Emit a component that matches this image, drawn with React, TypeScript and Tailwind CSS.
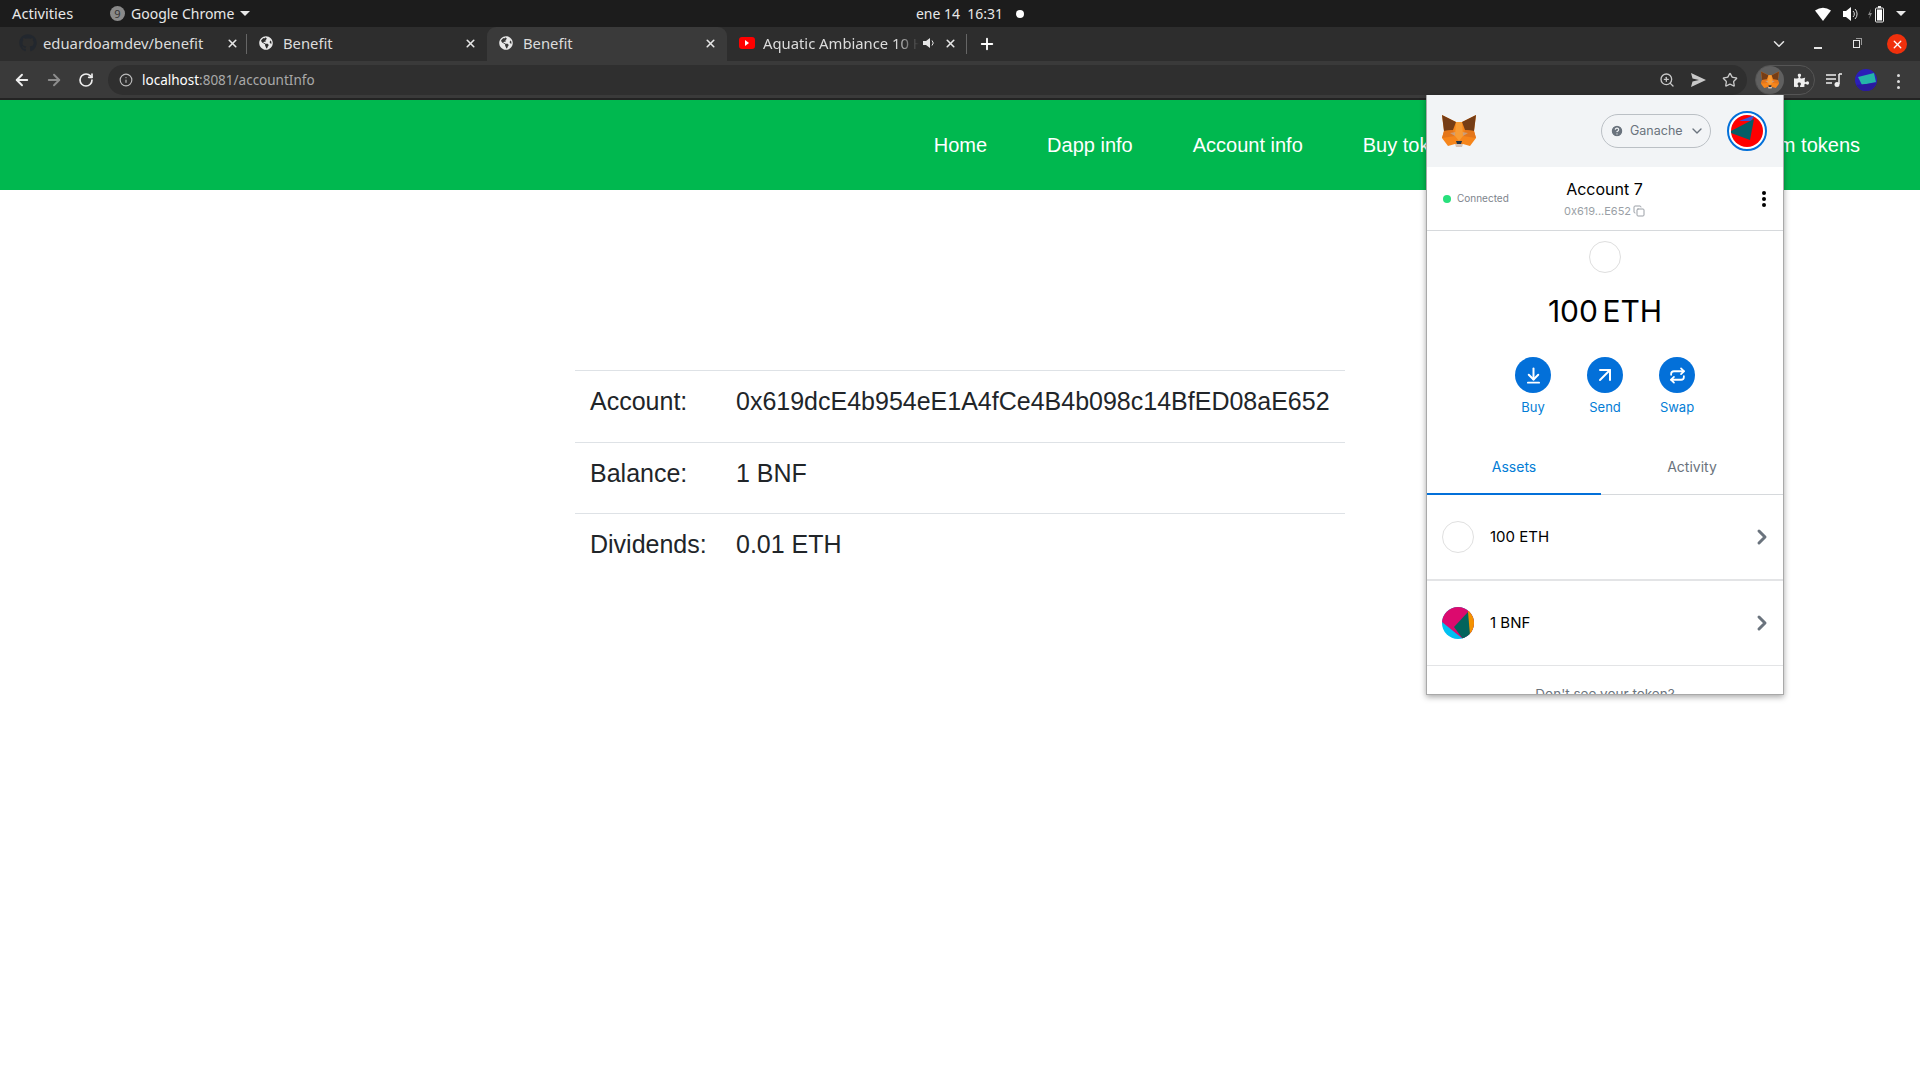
import React from 'react';
import { ArrowDownToLine, ArrowLeft, ArrowRight, ArrowUpRight, ChevronDown, ChevronRight, Copy, HelpCircle, Info, Plus, Repeat, RotateCw, Star, X, ZoomIn } from 'lucide-react';
import { FaGithub, FaGlobeAmericas, FaPuzzlePiece } from 'react-icons/fa';

const uiFont = "font-['Noto_Sans',sans-serif]";
const mmFont = "font-['Inter',sans-serif]";

const Fox: React.FC<{ size: number }> = ({ size }) => (
  <svg width={size} height={size} viewBox="0 0 34 34">
    <polygon points="0,1 14,8 20,8 34,1 32,17 34,24 28,32 21,30 13,30 6,32 0,24 2,17" fill="#f6851b" />
    <polygon points="0,1 14,8 11,16 2,17" fill="#763d16" />
    <polygon points="34,1 20,8 23,16 32,17" fill="#763d16" />
    <polygon points="2,17 11,16 13,22 0,24" fill="#e4761b" />
    <polygon points="32,17 23,16 21,22 34,24" fill="#e4761b" />
    <polygon points="8,19 14,18 13,22" fill="#c0ad9e" opacity="0.7" />
    <polygon points="26,19 20,18 21,22" fill="#c0ad9e" opacity="0.7" />
    <polygon points="13,30 21,30 20,33 14,33" fill="#d7c1b3" />
    <polygon points="14,27 20,27 19,30 15,30" fill="#233447" />
    <polygon points="14,8 20,8 21,22 17,27 13,22" fill="#f89c35" />
  </svg>
);

const Tab: React.FC<{ icon: React.ReactNode; title: string; active?: boolean; sep?: boolean; audio?: boolean }> = ({ icon, title, active, sep, audio }) => (
  <div className={`relative flex w-[240px] items-center pl-[12px] ${sep && !audio ? 'pr-[6px]' : 'pr-[8px]'} ${active ? 'h-[38px] rounded-t-[9px] bg-[#3a3a3a] pb-[6px]' : 'h-[34px] self-start pb-[2px]'}`}>
    <div className="flex w-[24px] shrink-0 items-center">{icon}</div>
    <span className={`min-w-0 flex-1 overflow-hidden whitespace-nowrap text-[14.800px] text-[#dcdcdc] ${audio ? 'mr-[4px] [mask-image:linear-gradient(to_right,black_85%,transparent)]' : ''}`}>{title}</span>
    {audio && (
      <svg width="12" height="12" viewBox="0 0 12 12" className="mr-[9px] shrink-0">
        <path d="M0 4h3l4-3v10L3 8H0z" fill="#e6e6e6" />
        <path d="M9 3.500a3.500 3.500 0 0 1 0 5" stroke="#e6e6e6" fill="none" />
      </svg>
    )}
    <X size={13} strokeWidth={3} className="mr-[2px] shrink-0 text-[#e6e6e6]" />
    {sep && <div className="absolute right-0 top-[7px] h-[20px] w-px bg-[#666]" />}
  </div>
);

const TopBar = () => (
  <div className={`flex h-[27px] items-center justify-between bg-[#1c1c1c] pl-[12px] pr-[14px] text-[14px] text-[#e8e8e8] ${uiFont}`}>
    <div className="flex flex-1 items-center">
      <span className="w-[62px] text-[14.700px]">Activities</span>
      <div className="ml-[36px] flex h-[15px] w-[15px] items-center justify-center rounded-full bg-[#8a8a8a] text-[11px] leading-none text-[#333]">9</div>
      <span className="ml-[6px]">Google Chrome</span>
      <div className="ml-[6px] h-0 w-0 border-x-[5px] border-t-[5px] border-x-transparent border-t-[#e8e8e8]" />
    </div>
    <div className="ml-[22px] flex items-center">
      <span>ene 14&nbsp; 16:31</span>
      <div className="ml-[13px] h-[8px] w-[8px] rounded-full bg-white" />
    </div>
    <div className="flex flex-1 items-center justify-end">
      <svg width="16" height="14" viewBox="0 0 16 14"><path d="M0 3.500Q8 -2 16 3.500L8 14z" fill="#fff" /></svg>
      <svg width="16" height="14" viewBox="0 0 16 14" className="ml-[12px]">
        <path d="M0 4h3l5-4v14l-5-4H0z" fill="#fff" />
        <path d="M10 4a4 4 0 0 1 0 6M12 2a7 7 0 0 1 0 10" stroke="#ddd" fill="none" />
      </svg>
      <svg width="16" height="18" viewBox="0 0 16 18" className="ml-[9px]">
        <path d="M3 4L0 10h2l-1 4 3-6H2z" fill="#888" />
        <rect x="7.500" y="3" width="8" height="14" rx="1" fill="none" stroke="#eee" />
        <rect x="9" y="4.500" width="5" height="11" fill="#fff" />
        <rect x="10" y="1" width="3" height="2" fill="#eee" />
      </svg>
      <div className="ml-[12px] h-0 w-0 border-x-[5px] border-t-[5px] border-x-transparent border-t-[#e8e8e8]" />
    </div>
  </div>
);

const TabStrip = () => (
  <div className={`flex h-[38px] items-start bg-[#3a3a3a] ${uiFont}`}>
    <div className="flex h-[34px] flex-1 items-start bg-[#2d2d2d] pl-[7px]">
      <Tab icon={<FaGithub size={18} className="text-[#22272e]" />} title="eduardoamdev/benefit" sep />
      <Tab icon={<FaGlobeAmericas size={14} className="text-[#e8e8e8]" />} title="Benefit" />
      <Tab icon={<FaGlobeAmericas size={14} className="text-[#e8e8e8]" />} title="Benefit" active />
      <Tab
        icon={
          <div className="flex h-[12px] w-[16px] items-center justify-center rounded-[3px] bg-[#f00]">
            <div className="h-0 w-0 border-y-[3px] border-l-[4px] border-y-transparent border-l-white" />
          </div>
        }
        title="Aquatic Ambiance 10 H"
        audio
        sep
      />
      <Plus size={18} strokeWidth={2.500} className="ml-[11px] mt-[8px] text-white" />
      <div className="flex h-[34px] flex-1 items-center justify-end pr-[13px] text-[#e6e6e6]">
        <ChevronDown size={18} />
        <div className="ml-[26px] mt-[8px] h-[1.500px] w-[8px] bg-[#e6e6e6]" />
        <div className="relative ml-[31px] h-[8px] w-[7px] border border-[#e6e6e6]">
          <div className="absolute -right-[3px] -top-[3px] h-[7px] w-[6px] border-r border-t border-[#999]" />
        </div>
        <div className="ml-[27px] flex h-[20px] w-[20px] items-center justify-center rounded-full bg-[#f0300c]">
          <X size={13} strokeWidth={2.500} className="text-white" />
        </div>
      </div>
    </div>
  </div>
);

const Toolbar = () => (
  <div className={`flex h-[35px] items-start border-b-2 border-[#232323] bg-[#3a3a3a] pl-[13px] pr-[14px] ${uiFont}`}>
    <ArrowLeft size={18} strokeWidth={2.500} className="mt-[6px] text-[#eee]" />
    <ArrowRight size={18} strokeWidth={2.500} className="ml-[14px] mt-[6px] text-[#8d8d8d]" />
    <RotateCw size={16} strokeWidth={2.500} className="ml-[15px] mt-[7px] text-[#eee]" />
    <div className="ml-[14px] flex h-[30px] w-[1639px] items-center rounded-full bg-[#2f2f2f] pl-[11px] pr-[9px]">
      <Info size={14} className="text-[#bbb]" />
      <span className="ml-[9px] text-[13.500px] text-white">localhost<span className="text-[#a9a9a9]">:8081/accountInfo</span></span>
      <div className="flex-1" />
      <ZoomIn size={16} className="text-[#c8c8c8]" />
      <svg width="15" height="14" viewBox="0 0 15 14" className="ml-[16px]"><path d="M0 0l15 7L0 14l1.500-5.500L8 7 1.500 5.500z" fill="#c8c8c8" /></svg>
      <Star size={16} strokeWidth={2} className="ml-[16px] text-[#c8c8c8]" />
    </div>
    <div className="ml-[8px] flex h-[30px] w-[60px] items-center rounded-full border border-[#555]">
      <div className="flex h-[28px] w-[28px] items-center justify-center rounded-full bg-[#606060]"><Fox size={18} /></div>
      <FaPuzzlePiece size={15} className="ml-[10px] text-[#eee]" />
    </div>
    <svg width="16" height="15" viewBox="0 0 16 15" className="ml-[11px] mt-[8px]">
      <path d="M0 2h10M0 6h10M0 10h6" stroke="#eee" strokeWidth="1.500" />
      <path d="M13 1h3M13 1v10" stroke="#eee" strokeWidth="1.500" />
      <circle cx="11" cy="11.500" r="2.500" fill="#eee" />
    </svg>
    <div className="ml-[13px] mt-[4px] h-[22px] w-[22px] overflow-hidden rounded-full bg-[#2b1fb8]">
      <svg width="22" height="22" viewBox="0 0 22 22">
        <polygon points="3,8 19,4 21,13 7,16" fill="#25b5a8" />
        <polygon points="0,16 22,14 22,22 0,22" fill="#2a1a9c" />
      </svg>
    </div>
    <div className="ml-[20px] mt-[9px] flex flex-col gap-[3px]">
      <div className="h-[3px] w-[3px] rounded-full bg-[#ddd]" />
      <div className="h-[3px] w-[3px] rounded-full bg-[#ddd]" />
      <div className="h-[3px] w-[3px] rounded-full bg-[#ddd]" />
    </div>
  </div>
);

const navLinks = ['Home', 'Dapp info', 'Account info', 'Buy tokens', 'Transfer tokens', 'Redeem tokens'];

const Nav = () => (
  <nav className="flex h-[90px] items-center justify-end gap-[60px] bg-[#00b84f] pr-[60px] text-[20px] text-white">
    {navLinks.map((l) => (
      <span key={l}>{l}</span>
    ))}
  </nav>
);

const rows = [
  ['Account:', '0x619dcE4b954eE1A4fCe4B4b098c14BfED08aE652'],
  ['Balance:', '1 BNF'],
  ['Dividends:', '0.01 ETH'],
];

const AccountTable = () => (
  <div className="mx-auto mt-[180px] w-[770px] text-[25px] leading-[37.500px] text-[#212529]">
    {rows.map(([k, v]) => (
      <div key={k} className="flex border-t border-[#dee2e6] px-[15px] pb-[21px] pt-[12px]">
        <span className="w-[146px] shrink-0">{k}</span>
        <span>{v}</span>
      </div>
    ))}
  </div>
);

const ActionButton: React.FC<{ icon: React.ReactNode; label: string }> = ({ icon, label }) => (
  <div className="flex w-[72px] flex-col items-center">
    <div className="flex h-[36px] w-[36px] items-center justify-center rounded-full bg-[#0370d9] text-white">{icon}</div>
    <span className="mt-[4px] text-[13px] leading-[20px] text-[#037dd6]">{label}</span>
  </div>
);

const TokenRow: React.FC<{ icon: React.ReactNode; label: string; thick?: boolean }> = ({ icon, label, thick }) => (
  <div className={`flex items-center border-[#e3e4e6] pl-[15px] pr-[9px] ${thick ? 'h-[86px] border-b-2' : 'h-[85px] border-b'}`}>
    {icon}
    <span className="ml-[16px] flex-1 text-[15px] text-black">{label}</span>
    <ChevronRight size={24} strokeWidth={3} className="text-[#6a737d]" />
  </div>
);

const Popup = () => (
  <div className={`absolute left-[1426px] top-[95px] h-[600px] w-[358px] overflow-hidden border-x border-b border-[#a9a9a9] bg-white shadow-[0_2px_6px_rgba(0,0,0,0.35)] ${mmFont}`}>
    <div className="flex h-[72px] items-center bg-[#f2f4f6] pl-[15px] pr-[13px]">
      <Fox size={34} />
      <div className="ml-[125px] flex h-[34px] w-[110px] items-center rounded-full border border-[#bbc0c5] pl-[8px] text-[12.500px] text-[#6a737d]">
        <HelpCircle size={14} fill="#6a737d" stroke="#f2f4f6" />
        <span className="ml-[6px]">Ganache</span>
        <ChevronDown size={16} className="ml-[6px]" />
      </div>
      <div className="ml-[16px] flex h-[40px] w-[40px] items-center justify-center rounded-full border-[2.500px] border-[#0370d9] bg-white">
        <div className="h-[32px] w-[32px] overflow-hidden rounded-full bg-[#f00]">
          <svg width="32" height="32" viewBox="0 0 32 32">
            <polygon points="8,6 24,0 20,6" fill="#3b57d9" />
            <polygon points="0,16 23,4 19,25 0,18" fill="#035e66" />
          </svg>
        </div>
      </div>
    </div>
    <div className="flex h-[64px] items-center border-b border-[#d6d9dc] pl-[16px] pr-[17px]">
      <div className="flex w-[85px] items-center">
        <div className="h-[8px] w-[8px] rounded-full bg-[#28e07c]" />
        <span className="ml-[6px] text-[10px] text-[#7d848c]">Connected</span>
      </div>
      <div className="flex flex-1 flex-col items-center pb-[1px]">
        <span className="text-[16px] leading-[20px] text-black">Account 7</span>
        <div className="mt-[5px] flex items-center text-[11px] leading-[14px] text-[#9a9fa6]">
          0x619...E652
          <Copy size={12} className="ml-[2px]" />
        </div>
      </div>
      <div className="flex w-[85px] flex-col items-end gap-[2px]">
        <div className="h-[4px] w-[4px] rounded-full bg-black" />
        <div className="h-[4px] w-[4px] rounded-full bg-black" />
        <div className="h-[4px] w-[4px] rounded-full bg-black" />
      </div>
    </div>
    <div className="flex flex-col items-center pt-[10px]">
      <div className="h-[32px] w-[32px] rounded-full border border-[#dedede]" />
      <div className="mt-[18px] text-[30px] leading-[40px] text-black [word-spacing:-4px]">100 ETH</div>
      <div className="mt-[26px] flex">
        <ActionButton icon={<ArrowDownToLine size={19} strokeWidth={2.500} />} label="Buy" />
        <ActionButton icon={<ArrowUpRight size={24} />} label="Send" />
        <ActionButton icon={<Repeat size={17} strokeWidth={2.500} />} label="Swap" />
      </div>
    </div>
    <div className="mt-[22px] flex h-[56px] border-b border-[#d6d9dc] text-[14px]">
      <div className="-mb-px flex w-[174px] items-center justify-center border-b-2 border-[#0370d9] text-[#037dd6]">Assets</div>
      <div className="flex flex-1 items-center justify-center text-[#6a737d]">Activity</div>
    </div>
    <TokenRow label="100 ETH" thick icon={<div className="h-[32px] w-[32px] rounded-full border border-[#e0e0e0]" />} />
    <TokenRow
      label="1 BNF"
      icon={
        <div className="h-[32px] w-[32px] overflow-hidden rounded-full bg-[#00c1f2]">
          <svg width="32" height="32" viewBox="0 0 32 32">
            <polygon points="0,0 32,0 32,32 21,32 0,15" fill="#dc0a6e" />
            <polygon points="26,4 32,4 32,32 26,32" fill="#f49200" />
            <polygon points="12,20 26,5 28,28 21,32" fill="#03645c" />
          </svg>
        </div>
      }
    />
    <div className="mt-[18px] text-center text-[13.500px] leading-[20px] text-[#6a737d]">Don't see your token?</div>
  </div>
);

export default function App() {
  return (
    <div className="relative h-[1080px] w-[1920px] overflow-hidden bg-white font-['Liberation_Sans',sans-serif]">
      <TopBar />
      <TabStrip />
      <Toolbar />
      <Nav />
      <AccountTable />
      <Popup />
    </div>
  );
}
